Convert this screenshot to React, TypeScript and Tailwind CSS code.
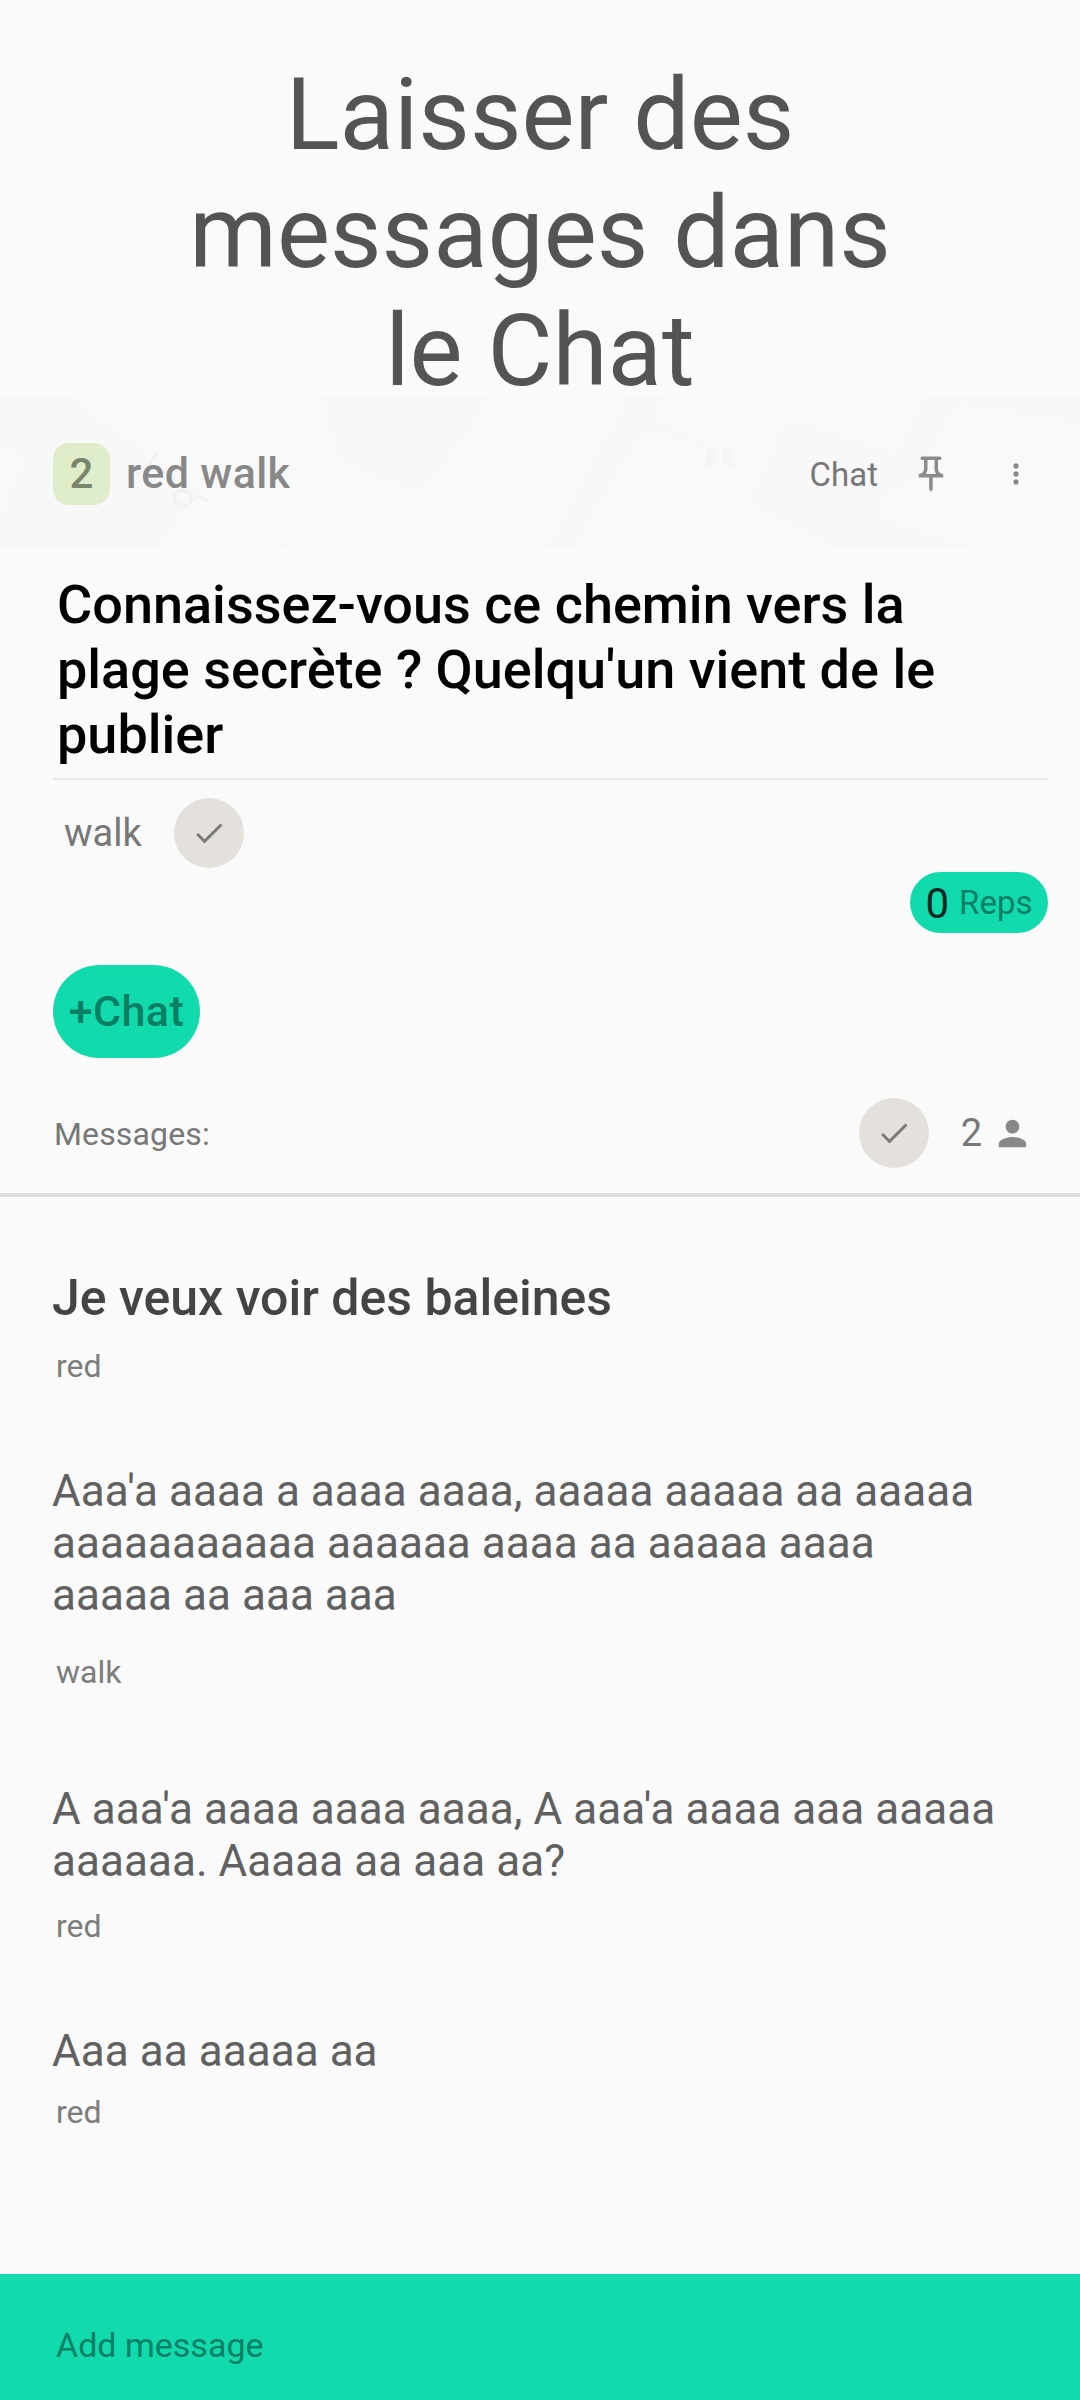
import { MdCheck, MdMoreVert, MdOutlinePushPin, MdPerson } from "react-icons/md";

type Message = {
  text: string;
  author: string;
  /** First message of the thread is set larger and heavier. */
  lead?: boolean;
  className: string;
  authorClassName: string;
};

const messages: Message[] = [
  {
    text: "Je veux voir des baleines",
    author: "red",
    lead: true,
    className: "mt-[72px]",
    authorClassName: "mt-[19px]",
  },
  {
    text: "Aaa'a aaaa a aaaa aaaa, aaaaa aaaaa aa aaaaa aaaaaaaaaaa aaaaaa aaaa aa aaaaa aaaa\naaaaa aa aaa aaa",
    author: "walk",
    className: "mt-[79px]",
    authorClassName: "mt-[31px]",
  },
  {
    text: "A aaa'a aaaa aaaa aaaa, A aaa'a aaaa aaa aaaaa aaaaaa. Aaaaa aa aaa aa?",
    author: "red",
    className: "mt-[91px]",
    authorClassName: "mt-[19px]",
  },
  {
    text: "Aaa aa aaaaa aa",
    author: "red",
    className: "mt-[79px]",
    authorClassName: "mt-[15px]",
  },
];

function CheckBadge() {
  return (
    <span className="flex h-[70px] w-[70px] shrink-0 items-center justify-center rounded-full bg-[#e4e1dd]">
      <MdCheck size={36} className="text-[#7b7a78]" />
    </span>
  );
}

/** Washed-out map that shows through behind the header row. */
function MapBackdrop() {
  return (
    <svg
      className="absolute inset-0 h-full w-full"
      viewBox="0 0 1080 152"
      preserveAspectRatio="none"
      aria-hidden="true"
    >
      <rect width="1080" height="152" fill="#f9f9f9" />
      <path d="M0 0H70L130 42 200 92 162 152H0V115L24 62 0 52Z" fill="#f8f8f8" />
      <path d="M320 0H490L455 50 420 96 385 88 335 62Z" fill="#f8f8f8" />
      <path d="M182 0L152 50 180 110 280 150 412 152 540 0H495L420 96" fill="none" stroke="#f7f7f7" strokeWidth="2" />
      <path d="M626 0H665L575 152H545Z" fill="#f8f8f8" />
      <path d="M655 22L706 46V56L640 32Z" fill="#f8f8f8" />
      <path d="M742 0H793L720 152H660L692 84 720 52Z" fill="#f9f9f7" />
      <path d="M785 20L905 60 880 120 980 152H835L745 110Z" fill="#f8f8f8" />
      <path d="M925 0H1080V30L960 10 905 95 872 95Z" fill="#f8f8f8" />
      <path d="M706 50l11 3v14l-11 5zM722 53l11-3v22l-11-5z" fill="#f4f5f5" />
      <path
        d="M133 68l6 12M156 58l-10 16M158 78c8-6 16-2 16 6M174 102c0-8 12-10 16-4s-2 14-8 12-8-4-8-8M194 104l6-4 8 5"
        fill="none"
        stroke="#f1f1f1"
        strokeWidth="3"
      />
    </svg>
  );
}

function ThreadHeader() {
  return (
    <header className="relative h-[152px] pt-[3px]">
      <MapBackdrop />
      <div className="relative flex h-full items-center pl-[53px] pr-12">
        <span className="flex h-[62px] w-[57px] items-center justify-center rounded-[16px] bg-[#e0edcb] text-[42px] font-medium text-[#78866c]">
          2
        </span>
        <span className="ml-4 text-[43px] font-medium tracking-[0.4px] text-[#888]">red walk</span>
        <span className="ml-auto pt-0.5 text-[33px] text-[#777]">Chat</span>
        <MdOutlinePushPin size={42} className="ml-8 text-[#8b8b8b]" />
        <MdMoreVert size={32} className="ml-12 text-[#888]" />
      </div>
    </header>
  );
}

function MessageItem({ message }: { message: Message }) {
  return (
    <li className={message.className}>
      <p
        className={
          message.lead
            ? "text-[50px] leading-[58px] font-medium text-[#444]"
            : "whitespace-pre-line text-[44px] leading-[52px] tracking-[0.06px] text-[#606060]"
        }
      >
        {message.text}
      </p>
      <p className={`pl-1 text-[32px] leading-10 text-[#7d7d7d] ${message.authorClassName}`}>
        {message.author}
      </p>
    </li>
  );
}

export default function App() {
  return (
    <main className="flex h-[2400px] w-[1080px] flex-col overflow-hidden bg-[#fafafa] font-[Roboto,sans-serif]">
      <h1 className="mx-auto mt-14 w-[760px] text-center text-[100px] leading-[118px] text-[#545454]">
        Laisser des messages dans
        <br />
        le Chat
      </h1>

      <div className="-mt-3.5">
        <ThreadHeader />
      </div>

      <section className="pl-[53px] pr-8">
        <h2 className="mt-6 border-b-2 border-[#e8e8e8] pb-[11px] pl-1 text-[54px] leading-[65px] font-medium text-black">
          Connaissez-vous ce chemin vers la
          <br />
          plage secrète ? Quelqu'un vient de le
          <br />
          publier
        </h2>

        <div className="mt-[18px] flex items-center pl-[11px]">
          <span className="pt-px text-[38px] text-[#777]">walk</span>
          <span className="ml-8">
            <CheckBadge />
          </span>
        </div>

        <div className="mt-1 flex justify-end">
          <span className="flex h-[61px] w-[138px] items-center justify-center gap-2.5 rounded-full bg-[#11daad] pt-px">
            <span className="text-[42px] text-[#08281f]">0</span>
            <span className="text-[33px] text-[#0c7f65]">Reps</span>
          </span>
        </div>

        <button
          type="button"
          className="mt-8 flex h-[93px] w-[147px] items-center justify-center rounded-full bg-[#11daad] text-[43px] font-medium tracking-[0.4px] text-[#087e62]"
        >
          +Chat
        </button>
      </section>

      <div className="mt-10 flex items-center border-b-4 border-[#dcdcdc] pb-[25px] pl-[54px] pr-[47px]">
        <span className="pt-0.5 text-[32px] tracking-[0.15px] text-[#777]">Messages:</span>
        <span className="ml-auto">
          <CheckBadge />
        </span>
        <span className="ml-8 text-[38px] text-[#777]">2</span>
        <MdPerson size={41} className="ml-2.5 text-[#888]" />
      </div>

      <ul className="pl-[52px] pr-[72px]">
        {messages.map((message, index) => (
          <MessageItem key={index} message={message} />
        ))}
      </ul>

      <footer className="mt-auto h-[126px] bg-[#11daad] pt-[50px] pl-14">
        <p className="text-[34px] leading-[43px] text-[#0b8063]">Add message</p>
      </footer>
    </main>
  );
}
